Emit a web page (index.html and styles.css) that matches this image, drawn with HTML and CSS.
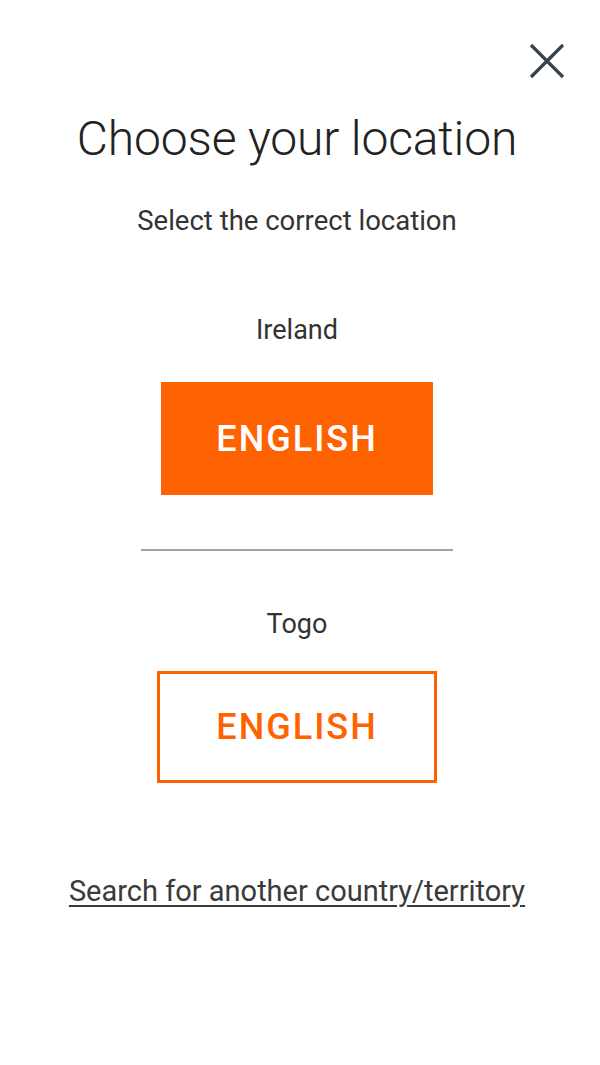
FILE: index.html
```html
<!DOCTYPE html>
<html lang="en">
<head>
<meta charset="utf-8">
<title>Choose your location</title>
<link rel="stylesheet" href="styles.css">
</head>
<body>
<div class="dialog">
  <div class="topbar">
    <button class="close" aria-label="Close">
      <svg width="36" height="36" viewBox="0 0 36 36"><path d="M2 2 L34 34 M34 2 L2 34" stroke="#37424b" stroke-width="3.2" fill="none"/></svg>
    </button>
  </div>
  <h1 class="title">Choose your location</h1>
  <p class="subtitle">Select the correct location</p>
  <div class="option">
    <p class="country">Ireland</p>
    <a class="btn btn-filled" href="#">ENGLISH</a>
  </div>
  <hr class="divider">
  <div class="option option-second">
    <p class="country">Togo</p>
    <a class="btn btn-outline" href="#">ENGLISH</a>
  </div>
  <a class="search-link" href="#">Search for another country/territory</a>
</div>
</body>
</html>
```
FILE: styles.css
```css
html, body {
  margin: 0;
  padding: 0;
  background: #ffffff;
}
body {
  font-family: Roboto, "Liberation Sans", sans-serif;
  color: #222;
}
.dialog {
  width: 594px;
  display: flex;
  flex-direction: column;
  align-items: center;
}
.topbar {
  align-self: stretch;
  display: flex;
  justify-content: flex-end;
  padding: 43px 29px 0 0;
  height: 36px;
}
.close {
  border: 0;
  background: none;
  padding: 0;
  width: 36px;
  height: 36px;
  cursor: pointer;
}
.close svg { display: block; }
.title {
  margin: 32px 0 0;
  font-weight: 300;
  font-size: 48px;
  line-height: 56px;
  color: #222;
  letter-spacing: -0.15px;
}
.subtitle {
  margin: 37px 0 0;
  font-size: 27.5px;
  line-height: 34px;
  color: #333;
}
.option {
  display: flex;
  flex-direction: column;
  align-items: center;
}
.country {
  margin: 75px 0 0;
  font-size: 27px;
  line-height: 34px;
  color: #333;
}
.btn {
  box-sizing: border-box;
  display: flex;
  align-items: center;
  justify-content: center;
  text-decoration: none;
  font-weight: 500;
  font-size: 36px;
  letter-spacing: 2px;
}
.btn-filled {
  margin-top: 35px;
  width: 272px;
  height: 113px;
  background: #ff6200;
  color: #fff;
}
.divider {
  margin: 54px 0 0;
  width: 312px;
  height: 2px;
  border: 0;
  background: #a3a3a3;
}
.option-second .country {
  margin-top: 56px;
}
.btn-outline {
  margin-top: 30px;
  width: 280px;
  height: 112px;
  border: 3px solid #ff6200;
  color: #ff6200;
  background: #fff;
}
.search-link {
  margin-top: 91px;
  font-size: 29px;
  line-height: 34px;
  color: #3a3a3a;
  text-decoration: underline;
  text-underline-offset: 4px;
}
```
